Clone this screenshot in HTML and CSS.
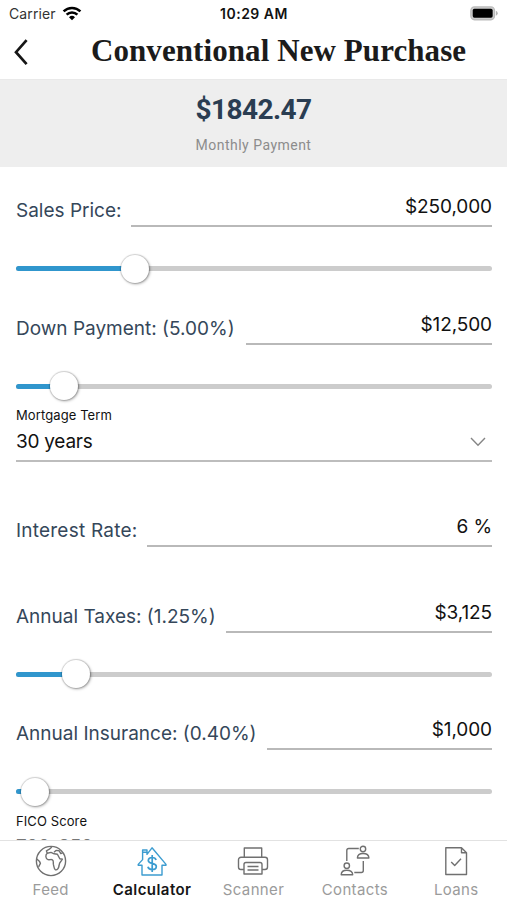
FILE: index.html
```html
<!DOCTYPE html>
<html lang="en">
<head>
<meta charset="utf-8">
<title>Conventional New Purchase</title>
<link rel="stylesheet" href="styles.css">
</head>
<body>
<div class="phone">
  <header class="status">
    <div class="carrier"><span>Carrier</span>
      <svg width="20" height="15" viewBox="0 0 20 15" fill="none" stroke="#000" stroke-width="2.5"><path d="M1.6 5.4a12 12 0 0 1 16.8 0M4.6 8.6a7.7 7.7 0 0 1 10.8 0"/><path d="M7 11.2a4.3 4.3 0 0 1 6 0l-3 3z" fill="#000" stroke="none"/></svg>
    </div>
    <div class="time">10:29 AM</div>
    <svg class="battery" width="29" height="15" viewBox="0 0 32 15" preserveAspectRatio="none"><rect x=".9" y=".9" width="26.2" height="12.8" rx="4" fill="#ccc" stroke="#bbb" stroke-width="1.4"/><rect x="3" y="2.8" width="22" height="9" rx="1.8" fill="#000"/><path d="M28.6 4.8q2 .8 2 2.5t-2 2.5z" fill="#b5b5b5"/></svg>
  </header>
  <nav class="title-bar">
    <svg class="back" width="14" height="27" viewBox="0 0 14 27" fill="none" stroke="#161616" stroke-width="2.7"><path d="M12.6 1.2 2 13.2l10.6 12"/></svg>
    <h1>Conventional New Purchase</h1>
  </nav>
  <section class="summary">
    <strong>$1842.47</strong>
    <span>Monthly Payment</span>
  </section>
  <main class="form">
    <div class="field"><label class="w-price">Sales Price:</label><output>$250,000</output></div>
    <div class="slider"><div class="track"><div class="fill" style="width:25%"></div><div class="thumb"></div></div></div>
    <div class="field"><label class="w-down">Down Payment: (5.00%)</label><output>$12,500</output></div>
    <div class="slider"><div class="track"><div class="fill" style="width:10%"></div><div class="thumb"></div></div></div>
    <div class="select">
      <small>Mortgage Term</small>
      <div class="choice"><span>30 years</span><svg width="16" height="10" viewBox="0 0 16 10" fill="none" stroke="#858585" stroke-width="1.4"><path d="m1 1 7 7.2L15 1"/></svg></div>
    </div>
    <div class="field tall"><label class="w-rate">Interest Rate:</label><output>6 %</output></div>
    <div class="field tall"><label class="w-tax">Annual Taxes: (1.25%)</label><output>$3,125</output></div>
    <div class="slider"><div class="track"><div class="fill" style="width:12.5%"></div><div class="thumb"></div></div></div>
    <div class="field"><label class="w-ins">Annual Insurance: (0.40%)</label><output>$1,000</output></div>
    <div class="slider"><div class="track"><div class="fill" style="width:4%"></div><div class="thumb"></div></div></div>
    <div class="select fico"><small>FICO Score</small><div class="choice"><span>700-850</span></div></div>
  </main>
  <footer class="tabs">
    <div class="tab">
      <svg width="34" height="34" viewBox="0 0 34 34"><circle cx="17" cy="17" r="14.6"/><path d="M13.2 9.2c-2 1.8-1.8 5.4.8 6.4 1.6.5 3-.5 4.4.2 1.6.9.6 2.8 1 4.6.5 2 .6 4.8 2 5.4 2 .6 3.2-1.8 3.6-3.8.3-1.8.2-2.8 1.6-4.2l1.8-2.6-2.6-.4-2.4-4.6-3.2-.4-3.2-1.4zM13.2 9.2l-.8-2.4 3-1.6 2.4-2.2M20 8.2l2-1.8 3.2.4 1.6 2.8 1.8-.8M2.8 15l2.8 2.6.8 1.8-1.8 3.4"/></svg>
      <span>Feed</span>
    </div>
    <div class="tab active">
      <svg width="34" height="34" viewBox="0 0 34 34"><path d="M7 31V21.2H3.2v-.8L7.6 15.6V6H12v4.4L17 3.800l14 16.600v.8h-4V31zM7.600 8.300H12"/><path d="M21.100 15.900c-.5-1.600-2-2.400-3.900-2.400-2.200 0-3.900 1-3.900 2.900 0 4.200 8 1.800 8 6 0 2-1.800 3.100-4.100 3.100-2.200 0-3.900-.9-4.300-2.800M17.200 11v17" stroke-width="1.700"/></svg>
      <span>Calculator</span>
    </div>
    <div class="tab">
      <svg width="34" height="34" viewBox="0 0 34 34"><path d="M8.300 13.300V4h17.400v9.300M8 25.500H5a2.500 2.500 0 0 1-2.500-2.500V15.800a2.500 2.500 0 0 1 2.500-2.500h24a2.500 2.500 0 0 1 2.500 2.500V23a2.500 2.500 0 0 1-2.500 2.500h-3M10 18.500h14a2 2 0 0 1 2 2V30H8v-9.500a2 2 0 0 1 2-2zM11.500 22.500h11M11.500 26h11"/></svg>
      <span>Scanner</span>
    </div>
    <div class="tab">
      <svg width="34" height="34" viewBox="0 0 34 34"><path d="M8.800 17V6.500a2 2 0 0 1 2-2h10M25.300 17v9.500a2 2 0 0 1-2 2h-7"/><circle cx="25" cy="5" r="2.700"/><path d="M19.400 14c0-3 2-4.500 5.600-4.500s5.900 1.500 5.900 4.500z"/><circle cx="8.800" cy="21.700" r="2.700"/><path d="M3.200 30.700c0-3 2-4.500 5.600-4.500s5.900 1.500 5.900 4.500z"/></svg>
      <span>Contacts</span>
    </div>
    <div class="tab">
      <svg width="34" height="34" viewBox="0 0 34 34"><path d="M6.800 3.700h15.700l5 5v21.800H6.800zM22.500 3.700v5h5M12.200 18l3.500 3.500 6.300-6.700"/></svg>
      <span>Loans</span>
    </div>
  </footer>
</div>
</body>
</html>
```
FILE: styles.css
```css
* { box-sizing: border-box; }
body { margin: 0; background: #fff; font-family: Inter, "Liberation Sans", sans-serif; color: #111; }
.phone { width: 507px; height: 900px; display: flex; flex-direction: column; overflow: hidden; }

.status { height: 27px; flex: none; display: grid; grid-template-columns: 1fr auto 1fr; align-items: center; padding: 0 8px 0 9px; }
.carrier { display: flex; align-items: center; gap: 6px; font-size: 14px; letter-spacing: .1px; color: #333; }
.time { font-size: 14px; font-weight: 600; letter-spacing: .5px; color: #111; }
.battery { justify-self: end; }

.title-bar { height: 52px; flex: none; display: flex; align-items: center; padding-left: 14px; }
.back { flex: none; margin-top: -1px; }
.title-bar h1 { margin: 0 0 5px 63px; font: 700 31px/40px "Liberation Serif", serif; letter-spacing: .08px; color: #1b1b1b; white-space: nowrap; }

.summary { height: 88px; flex: none; background: #eee; border-top: 1px solid #e9e9e9; display: flex; flex-direction: column; align-items: center; }
.summary strong { font: 700 28px/34px Roboto, sans-serif; letter-spacing: -.55px; color: #2a3d52; margin-top: 13px; }
.summary span { font: 400 14px/20px Roboto, sans-serif; color: #8c8c8c; letter-spacing: .48px; margin-top: 8px; }

.form { flex: 1; min-height: 0; overflow: hidden; padding: 0 15px 0 16px; }
.field { height: 60px; display: flex; align-items: flex-end; }
.field.tall { height: 85.5px; }
.field label { flex: none; font-size: 19px; line-height: 24px; margin-bottom: 4px; color: #35475a; white-space: nowrap; }
.field output { flex: 1; height: 36px; font-size: 19px; line-height: 32px; letter-spacing: -.1px; text-align: right; border-bottom: 2px solid #b9b9b9; color: #111; }
.w-price { width: 115px; }
.w-down { width: 230px; }
.w-rate { width: 131px; letter-spacing: .22px; }
.w-tax { width: 210px; }
.w-ins { width: 251px; }

.slider { height: 57.5px; padding-top: 39px; }
.track { height: 5px; border-radius: 3px; background: #ccc; display: flex; align-items: center; }
.fill { height: 5px; border-radius: 3px 0 0 3px; background: #3096cd; }
.thumb { flex: none; width: 28px; height: 28px; margin-left: -14px; border-radius: 50%; background: #fff; box-shadow: 0 0 1px 1px rgba(0,0,0,.15), 1px 1px 3px rgba(0,0,0,.35); }

.select { height: 59.5px; border-bottom: 2px solid #bdbdbd; padding-top: 4px; }
.select small { display: block; font-size: 13px; line-height: 18px; letter-spacing: .1px; }
.choice { display: flex; align-items: center; justify-content: space-between; font-size: 19px; line-height: 24px; letter-spacing: -.25px; margin-top: 6px; padding-right: 6px; }
.fico .choice { margin-top: 5px; color: #777; }

.tabs { height: 60px; flex: none; display: grid; grid-template-columns: repeat(5, 1fr); border-top: 1px solid #e2e2e2; background: #fff; }
.tab { display: flex; flex-direction: column; align-items: center; padding-top: 3px; font-size: 15px; line-height: 20px; letter-spacing: .35px; color: #9b9b9b; }
.tab svg { fill: none; stroke: #707070; stroke-width: 1.4; stroke-linejoin: round; }
.tab span { margin-top: 2px; }
.tab.active { color: #161616; font-weight: 600; letter-spacing: .45px; }
.tab.active svg { stroke: #3c9cd0; }
```
